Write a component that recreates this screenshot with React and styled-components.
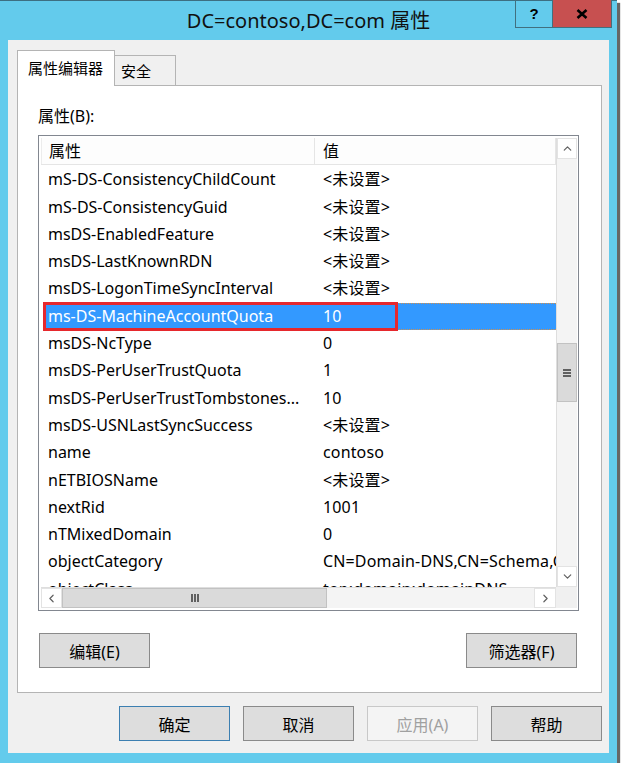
import React from "react";
import styled, { createGlobalStyle } from "styled-components";
import { ChevronUp, ChevronDown, ChevronLeft, ChevronRight } from "lucide-react";

const FONT = `"Noto Sans", "Noto Sans CJK SC", sans-serif`;

const attributes = [
  { name: "mS-DS-ConsistencyChildCount", value: "<未设置>" },
  { name: "mS-DS-ConsistencyGuid", value: "<未设置>" },
  { name: "msDS-EnabledFeature", value: "<未设置>" },
  { name: "msDS-LastKnownRDN", value: "<未设置>" },
  { name: "msDS-LogonTimeSyncInterval", value: "<未设置>" },
  { name: "ms-DS-MachineAccountQuota", value: "10", selected: true },
  { name: "msDS-NcType", value: "0" },
  { name: "msDS-PerUserTrustQuota", value: "1" },
  { name: "msDS-PerUserTrustTombstones...", value: "10" },
  { name: "msDS-USNLastSyncSuccess", value: "<未设置>" },
  { name: "name", value: "contoso" },
  { name: "nETBIOSName", value: "<未设置>" },
  { name: "nextRid", value: "1001" },
  { name: "nTMixedDomain", value: "0" },
  { name: "objectCategory", value: "CN=Domain-DNS,CN=Schema,CN=Configuration,DC=contoso,DC=com" },
  { name: "objectClass", value: "top;domain;domainDNS" },
];

const App = () => {
  return (
    <>
      <GlobalStyle />
      <Window>
        <TitleBar>
          <span />
          <Title>DC=contoso,DC=com 属性</Title>
          <CaptionButtons>
            <HelpButton>?</HelpButton>
            <CloseButton>
              <svg width="12" height="10" viewBox="0 0 12 10">
                <path d="M1.5 1 L10.5 9 M10.5 1 L1.5 9" stroke="#000" strokeWidth="2.6" />
              </svg>
            </CloseButton>
          </CaptionButtons>
        </TitleBar>
        <Client>
          <TabStrip>
            <Tab $active>属性编辑器</Tab>
            <Tab>安全</Tab>
          </TabStrip>
          <TabPanel>
            <Label>属性(B):</Label>
            <ListBox>
              <ListContent>
                <HeaderRow>
                  <HeaderCell $width={274}>属性</HeaderCell>
                  <HeaderCell>值</HeaderCell>
                </HeaderRow>
                <Rows>
                  {attributes.map((a) => (
                    <Row key={a.name} $selected={a.selected}>
                      <NameCell>{a.name}</NameCell>
                      <ValueCell>{a.value}</ValueCell>
                      {a.selected && <Marker />}
                    </Row>
                  ))}
                </Rows>
              </ListContent>
              <VScroll>
                <ArrowBtn $h={21}>
                  <ChevronUp size={13} strokeWidth={2.2} color="#606060" />
                </ArrowBtn>
                <VTrack>
                  <VThumb>
                    <Grip $dir="h" />
                  </VThumb>
                </VTrack>
                <ArrowBtn $h={21}>
                  <ChevronDown size={13} strokeWidth={2.2} color="#606060" />
                </ArrowBtn>
              </VScroll>
              <HScroll>
                <ArrowBtn $w={21}>
                  <ChevronLeft size={13} strokeWidth={2.2} color="#606060" />
                </ArrowBtn>
                <HTrack>
                  <HThumb>
                    <Grip $dir="v" />
                  </HThumb>
                </HTrack>
                <ArrowBtn $w={22}>
                  <ChevronRight size={13} strokeWidth={2.2} color="#606060" />
                </ArrowBtn>
              </HScroll>
              <Corner />
            </ListBox>
            <PanelButtons>
              <Button>编辑(E)</Button>
              <Button>筛选器(F)</Button>
            </PanelButtons>
          </TabPanel>
          <DialogButtons>
            <Button $default>确定</Button>
            <Button>取消</Button>
            <Button $disabled>应用(A)</Button>
            <Button>帮助</Button>
          </DialogButtons>
        </Client>
      </Window>
    </>
  );
};

export default App;

const GlobalStyle = createGlobalStyle`
  html, body {
    margin: 0;
    padding: 0;
    background: #ffffff;
  }
  body {
    font-family: ${FONT};
    color: #000;
  }
`;

const Window = styled.div`
  width: 617px;
  height: 763px;
  box-sizing: border-box;
  background: #63cbec;
  border-top: 1px solid #3d6f82;
  display: flex;
  flex-direction: column;
  box-shadow: 3px 3px 1px rgba(0, 0, 0, 0.6);
`;

const TitleBar = styled.div`
  height: 39px;
  display: grid;
  grid-template-columns: 1fr auto 1fr;
`;

const Title = styled.div`
  font-size: 20px;
  line-height: 40px;
  color: #111;
  white-space: nowrap;
`;

const CaptionButtons = styled.div`
  justify-self: end;
  align-self: start;
  display: flex;
  margin-right: 5px;
  margin-top: -1px;
  height: 27px;
  border: 1px solid #41707f;
  border-top: none;
`;

const HelpButton = styled.div`
  width: 36px;
  border-right: 1px solid #41707f;
  display: flex;
  align-items: center;
  justify-content: center;
  font-family: "Liberation Sans", sans-serif;
  font-weight: bold;
  font-size: 15px;
`;

const CloseButton = styled.div`
  width: 58px;
  background: #c75050;
  display: flex;
  align-items: center;
  justify-content: center;
`;

const Client = styled.div`
  flex: 1;
  margin: 0 8px 10px 8px;
  background: #f0f0f0;
  padding: 10px 7px 12px 9px;
  display: flex;
  flex-direction: column;
`;

const TabStrip = styled.div`
  display: flex;
  align-items: flex-end;
  height: 36px;
  position: relative;
  z-index: 1;
  margin-bottom: -1px;
`;

const Tab = styled.div`
  box-sizing: border-box;
  height: ${(p) => (p.$active ? 36 : 31)}px;
  padding: 0 10px 0 ${(p) => (p.$active ? 10 : 6)}px;
  min-width: ${(p) => (p.$active ? 98 : 61)}px;
  background: ${(p) => (p.$active ? "#ffffff" : "#f0f0f0")};
  border: 1px solid #b4b4b4;
  border-bottom: ${(p) => (p.$active ? "none" : "1px solid #b4b4b4")};
  border-left: ${(p) => (p.$active ? "1px solid #b4b4b4" : "none")};
  font-size: 15px;
  line-height: ${(p) => (p.$active ? 34 : 30)}px;
  white-space: nowrap;
`;

const TabPanel = styled.div`
  box-sizing: border-box;
  height: 608px;
  background: #ffffff;
  border: 1px solid #b4b4b4;
  padding: 20px 22px 0 20px;
  display: flex;
  flex-direction: column;
`;

const Label = styled.div`
  font-size: 16px;
  line-height: 20px;
`;

const ListBox = styled.div`
  margin-top: 9px;
  height: 476px;
  box-sizing: border-box;
  border: 1px solid #828790;
  padding: 2px 1px 2px 2px;
  display: grid;
  grid-template-columns: 1fr 21px;
  grid-template-rows: 1fr 21px;
  background: #ffffff;
`;

const ListContent = styled.div`
  display: flex;
  flex-direction: column;
  overflow: hidden;
  min-height: 0;
`;

const HeaderRow = styled.div`
  display: flex;
  height: 27px;
  flex: none;
  box-sizing: border-box;
  border-bottom: 1px solid #e5e5e5;
  background: #fdfdfd;
`;

const HeaderCell = styled.div`
  box-sizing: border-box;
  ${(p) => (p.$width ? `width: ${p.$width}px;` : "flex: 1;")}
  padding-left: ${(p) => (p.$width ? 7 : 8)}px;
  border-right: 1px solid #e5e5e5;
  border-left: ${(p) => (p.$width ? "1px solid #ececec" : "none")};
  font-size: 16px;
  line-height: 26px;
`;

const Rows = styled.div`
  padding-top: 1.3px;
  overflow: hidden;
  flex: 1;
`;

const Row = styled.div`
  position: relative;
  display: flex;
  height: 27.3px;
  margin-left: 3px;
  box-sizing: border-box;
  background: ${(p) => (p.$selected ? "#3399ff" : "transparent")};
  color: ${(p) => (p.$selected ? "#ffffff" : "#000000")};
  border-top: 1px dotted ${(p) => (p.$selected ? "#d09050" : "transparent")};
  border-bottom: 1px dotted ${(p) => (p.$selected ? "#d09050" : "transparent")};
  font-size: 16px;
  line-height: 25px;
  white-space: nowrap;
`;

const NameCell = styled.div`
  width: 271px;
  flex: none;
  padding-left: 4px;
  box-sizing: border-box;
  overflow: hidden;
`;

const ValueCell = styled.div`
  flex: 1;
  padding-left: 8px;
  overflow: hidden;
  letter-spacing: 0.15px;
`;

const Marker = styled.div`
  position: absolute;
  left: -1px;
  top: -2px;
  width: 355px;
  height: 29px;
  box-sizing: border-box;
  border: 3px solid #e6282d;
`;

const VScroll = styled.div`
  display: flex;
  flex-direction: column;
  background: #f4f4f4;
  border-left: 1px solid #dedede;
  box-sizing: border-box;
`;

const HScroll = styled.div`
  display: flex;
  background: #f4f4f4;
  border-top: 1px solid #dedede;
`;

const ArrowBtn = styled.div`
  flex: none;
  box-sizing: border-box;
  ${(p) => (p.$h ? `height: ${p.$h}px;` : "")}
  ${(p) => (p.$w ? `width: ${p.$w}px;` : "")}
  background: #ffffff;
  border: 1px solid #e3e3e3;
  display: flex;
  align-items: center;
  justify-content: center;
`;

const VTrack = styled.div`
  flex: 1;
  padding-top: 184px;
`;

const VThumb = styled.div`
  height: 59px;
  box-sizing: border-box;
  background: #dadada;
  border: 1px solid #c2c2c2;
  display: flex;
  align-items: center;
  justify-content: center;
`;

const HTrack = styled.div`
  flex: 1;
`;

const HThumb = styled.div`
  width: 265px;
  height: 100%;
  box-sizing: border-box;
  background: #dadada;
  border: 1px solid #c2c2c2;
  display: flex;
  align-items: center;
  justify-content: center;
`;

const Grip = styled.div`
  width: ${(p) => (p.$dir === "h" ? 8 : 2)}px;
  height: ${(p) => (p.$dir === "h" ? 2 : 8)}px;
  background: #606060;
  box-shadow: ${(p) =>
    p.$dir === "h"
      ? "0 -3px 0 #606060, 0 3px 0 #606060"
      : "-3px 0 0 #606060, 3px 0 0 #606060"};
`;

const Corner = styled.div`
  background: #f0f0f0;
`;

const PanelButtons = styled.div`
  display: flex;
  justify-content: space-between;
  margin: 22px 2px 0 1px;
`;

const Button = styled.div`
  width: 111px;
  height: 35px;
  box-sizing: border-box;
  background: ${(p) => (p.$disabled ? "#f4f4f4" : "#dddddd")};
  border: 1px solid
    ${(p) => (p.$default ? "#3c7fb1" : p.$disabled ? "#c8c8c8" : "#8a8a8a")};
  color: ${(p) => (p.$disabled ? "#a0a0a0" : "#000000")};
  font-size: 16px;
  display: flex;
  align-items: center;
  justify-content: center;
`;

const DialogButtons = styled.div`
  display: flex;
  justify-content: flex-end;
  gap: 13px;
  margin-top: 13px;
`;
